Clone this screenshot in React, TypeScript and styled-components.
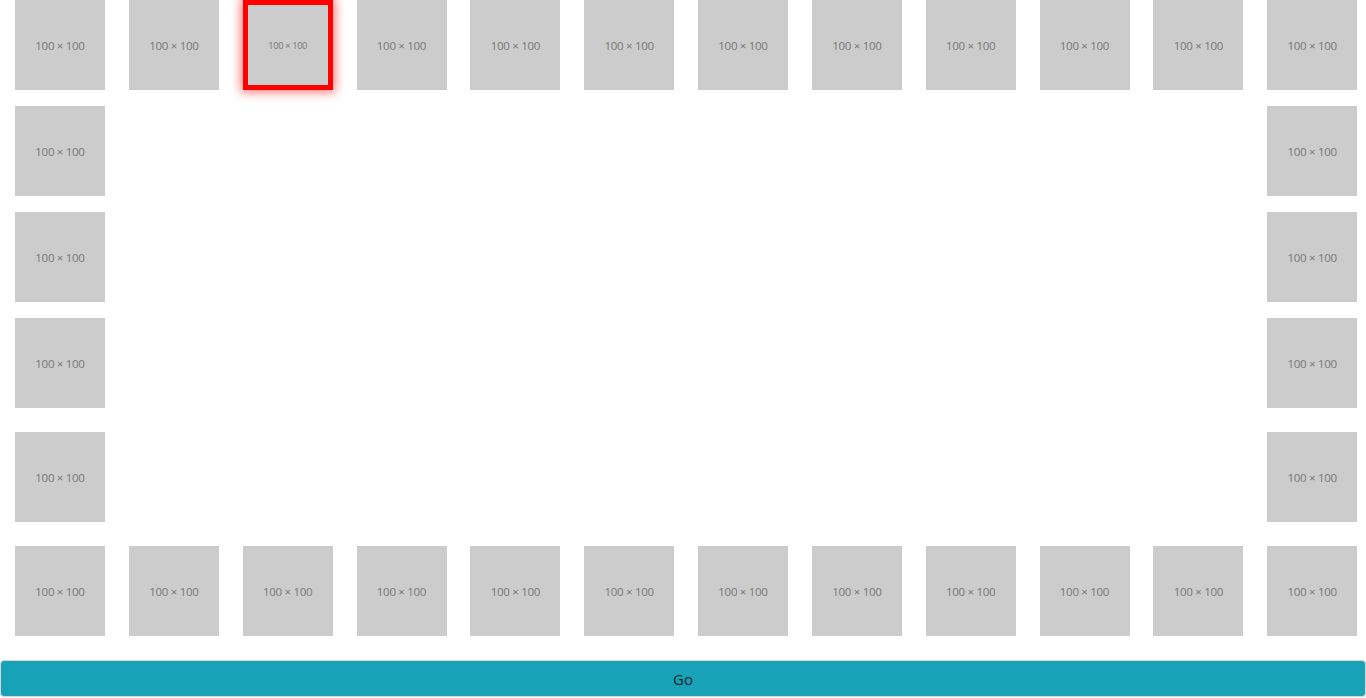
import React from "react";
import styled, { createGlobalStyle } from "styled-components";

const Global = createGlobalStyle`
  html, body { margin: 0; padding: 0; background: #fff; }
  body { font-family: "Open Sans", "Liberation Sans", sans-serif; }
`;

const Page = styled.div`
  width: 1366px;
  display: flex;
  flex-direction: column;
`;

const Row = styled.div<{ $gap: number }>`
  display: grid;
  grid-template-columns: repeat(12, 1fr);
  margin-bottom: ${(p) => p.$gap}px;
`;

const Cell = styled.div<{ $col: number }>`
  grid-column: ${(p) => p.$col + 1};
  padding-left: 15px;
  height: 90px;
`;

const Tile = styled.div<{ $active?: boolean }>`
  width: 90px;
  height: 90px;
  box-sizing: border-box;
  background: #cccccc;
  display: flex;
  align-items: center;
  justify-content: center;
  color: #777777;
  font-family: "Open Sans", "Liberation Sans", sans-serif;
  font-size: ${(p) => (p.$active ? "9.2px" : "11.5px")};
  letter-spacing: -0.3px;
  white-space: nowrap;
  ${(p) =>
    p.$active
      ? `border: 5px solid #ff0000; box-shadow: 0 0 10px 2px rgba(255,0,0,0.55);`
      : ""}
`;

const GoButton = styled.button`
  margin: 0 0 1px 0;
  width: 1366px;
  height: 37px;
  box-sizing: border-box;
  background: #17a2b8;
  border: 1px solid #d6d6d6;
  border-radius: 4px;
  color: #10262a;
  font-family: "Open Sans", "Liberation Sans", sans-serif;
  font-size: 15px;
  padding: 0;
  display: flex;
  align-items: center;
  justify-content: center;
`;

const rows: { cols: number[]; gap: number }[] = [
  { cols: [0, 1, 2, 3, 4, 5, 6, 7, 8, 9, 10, 11], gap: 16 },
  { cols: [0, 11], gap: 16 },
  { cols: [0, 11], gap: 16 },
  { cols: [0, 11], gap: 24 },
  { cols: [0, 11], gap: 24 },
  { cols: [0, 1, 2, 3, 4, 5, 6, 7, 8, 9, 10, 11], gap: 24 },
];

export default function App() {
  return (
    <Page>
      <Global />
      {rows.map((r, ri) => (
        <Row key={ri} $gap={r.gap}>
          {r.cols.map((c) => (
            <Cell key={c} $col={c}>
              <Tile $active={ri === 0 && c === 2}>100 × 100</Tile>
            </Cell>
          ))}
        </Row>
      ))}
      <GoButton>Go</GoButton>
    </Page>
  );
}
